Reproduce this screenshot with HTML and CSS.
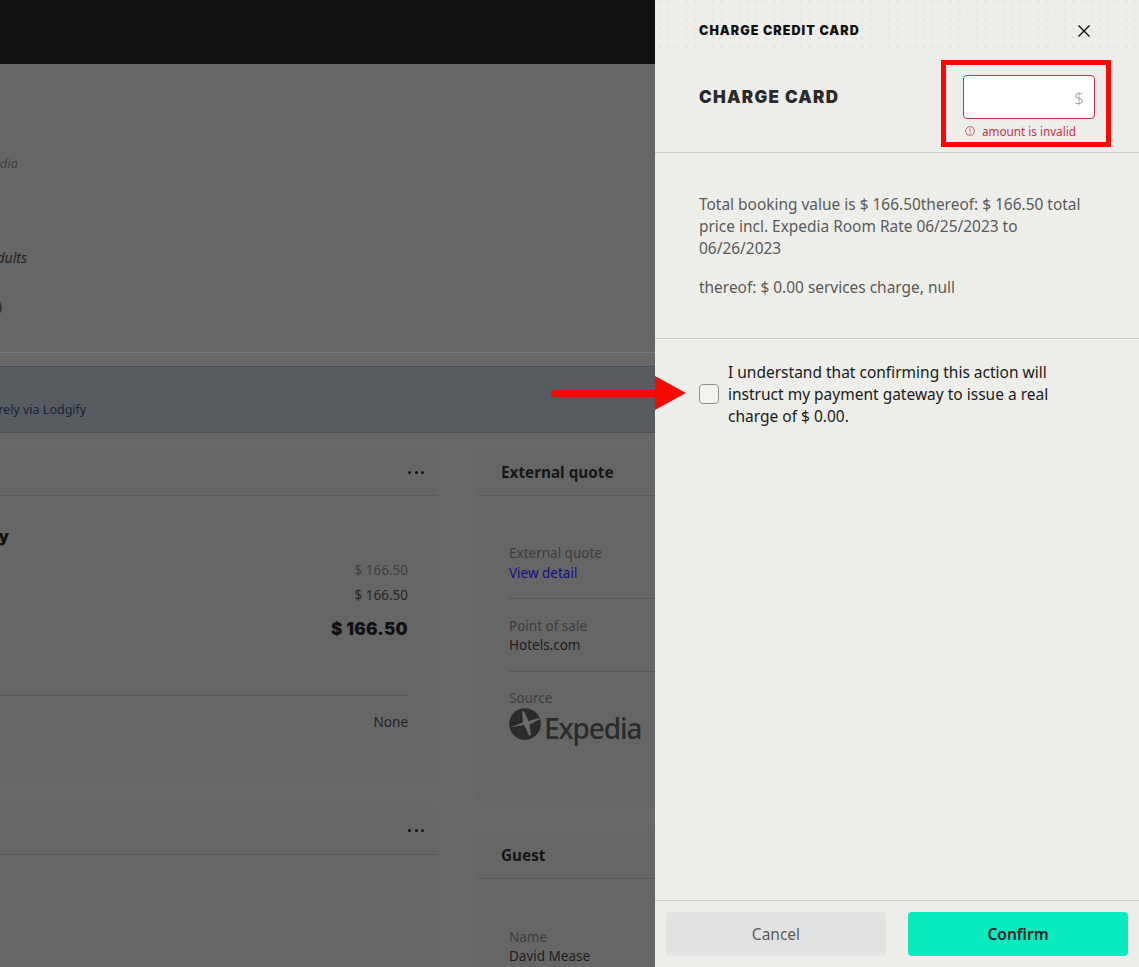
FILE: index.html
```html
<!DOCTYPE html>
<html lang="en">
<head>
<meta charset="utf-8">
<title>Charge credit card</title>
<link rel="stylesheet" href="styles.css">
</head>
<body>
<div class="page">
  <div class="topbar"></div>
  <section class="info">
    <div class="line source"><em>via Expedia</em></div>
    <div class="line adults"><em>2 adults</em></div>
    <div class="line nights"><span>(1 night)</span></div>
  </section>
  <div class="banner"><span class="banner-text">Charge the guest securely via Lodgify</span></div>
  <div class="columns">
    <div class="col">
      <article class="card card-price">
        <header class="card-head"><span class="dots"><i></i><i></i><i></i></span></header>
        <div class="price-body">
          <h3 class="price-title">Payment summary</h3>
          <div class="row muted">$ 166.50</div>
          <div class="row">$ 166.50</div>
          <div class="row total">$ 166.50</div>
          <div class="row none">None</div>
        </div>
      </article>
      <article class="card card-second">
        <header class="card-head"><span class="dots"><i></i><i></i><i></i></span></header>
      </article>
    </div>
    <div class="col">
      <article class="card card-quote">
        <header class="card-head side-head"><h2>External quote</h2></header>
        <div class="side-body">
          <div class="field ruled"><span class="label">External quote</span><a class="link" href="#">View detail</a></div>
          <div class="field ruled"><span class="label">Point of sale</span><span class="value">Hotels.com</span></div>
          <div class="field source-field"><span class="label">Source</span>
            <div class="logo">
              <svg class="logo-mark" viewBox="0 0 32 32" width="32" height="32" aria-hidden="true">
                <circle cx="16" cy="16" r="15.8" fill="#2b2b2b"/>
                <path d="M1 19.5 L14 14.5 L13 3 L15.5 4 L19.5 13 L30 10 L30.5 11.5 L20.5 16.5 L22 27 L20 27.5 L15 17 Z" fill="#6a6a6a"/>
              </svg>
              <span class="logo-text">Expedia</span>
            </div>
          </div>
        </div>
      </article>
      <article class="card card-guest">
        <header class="card-head side-head guest-head"><h2>Guest</h2></header>
        <div class="guest-body">
          <div class="field"><span class="label">Name</span><span class="value">David Mease</span></div>
        </div>
      </article>
    </div>
  </div>

  <aside class="drawer">
    <div class="drawer-top">
      <h1 class="drawer-title">CHARGE CREDIT CARD</h1>
      <svg class="close" viewBox="0 0 12 12" width="12" height="12" aria-hidden="true"><path d="M.5.5l11 11M11.5.5l-11 11" stroke="#111" stroke-width="1.4" fill="none"/></svg>
    </div>
    <div class="charge">
      <h2 class="charge-title">CHARGE CARD</h2>
      <div class="amount">
        <div class="input"><span>$</span></div>
        <div class="error">
          <svg viewBox="0 0 10 10" width="10" height="10" aria-hidden="true"><circle cx="5" cy="5" r="4.4" fill="none" stroke="#c0354a" stroke-width=".8"/><path d="M5 2.4v3.2M5 6.8v1" stroke="#c0354a" stroke-width=".8"/></svg>
          <span>amount is invalid</span>
        </div>
      </div>
    </div>
    <div class="details">
      <p>Total booking value is $ 166.50thereof: $ 166.50 total price incl. Expedia Room Rate 06/25/2023 to 06/26/2023</p>
      <p>thereof: $ 0.00 services charge, null</p>
    </div>
    <label class="consent">
      <span class="checkbox"></span>
      <span class="consent-text">I understand that confirming this action will instruct my payment gateway to issue a real charge of $ 0.00.</span>
    </label>
    <footer class="actions">
      <button class="btn cancel" type="button">Cancel</button>
      <button class="btn confirm" type="button">Confirm</button>
    </footer>
  </aside>

  <div class="mark-box"></div>
  <svg class="mark-arrow" viewBox="0 0 135 34" width="135" height="34" aria-hidden="true"><path d="M0 14h104V0l31 17-31 17V21H0z" fill="#f50a00"/></svg>
</div>
</body>
</html>
```
FILE: styles.css
```css
* { box-sizing: border-box; }
html, body { margin: 0; padding: 0; }
body { font-family: "Noto Sans", "Open Sans", sans-serif; font-size: 14px; color: #1d1d1d; }
h1, h2, h3, p { margin: 0; }

.page { position: relative; width: 1139px; height: 967px; overflow: hidden; background: #686868; display: flex; flex-direction: column; }
.topbar { flex: none; height: 64px; background: #121212; }

.info { flex: none; height: 289px; padding-top: 89px; background: #666; border-bottom: 1px solid #787878; display: flex; flex-direction: column; }
.line { display: flex; justify-content: flex-end; white-space: nowrap; height: 20px; line-height: 20px; font-size: 14px; }
.line.source { width: 18px; color: #3f3f3f; font-size: 13px; }
.line.adults { width: 27px; margin-top: 75px; color: #232323; }
.line.nights { width: 2px; margin-top: 28px; color: #232323; }

.banner { flex: none; margin-top: 13px; height: 67px; background: #565c60; border-top: 1px solid #48505a; border-bottom: 1px solid #48505a; padding-top: 33px; display: flex; }
.banner-text { margin-left: -133px; font-size: 12.5px; line-height: 20px; color: #1b2238; white-space: nowrap; }

.columns { flex: none; margin-top: 15px; margin-left: -400px; display: grid; grid-template-columns: 838px 400px; column-gap: 40px; }
.col { display: flex; flex-direction: column; }
.card { background: #666; border-radius: 6px; box-shadow: 0 2px 10px rgba(0,0,0,.02); }
.card-head { height: 48px; border-bottom: 1px solid #5a5a5a; display: flex; align-items: center; justify-content: flex-end; padding-right: 14px; }
.dots { display: flex; gap: 3.5px; margin-bottom: -1px; }
.dots i { width: 3px; height: 3px; border-radius: 50%; background: #141414; }

.card-price { height: 330px; }
.card-second { height: 160px; margin-top: 29px; }
.card-second .dots { margin-bottom: 1px; }
.price-body { padding: 62px 30px 0 0; position: relative; }
.price-title { position: absolute; right: 429px; top: 30px; font-size: 16px; font-weight: 900; line-height: 20px; color: #111; font-family: Inter, "Noto Sans", sans-serif; white-space: nowrap; }
.row { text-align: right; height: 25px; line-height: 25px; font-size: 13.5px; color: #262626; }
.row.muted { color: #404040; }
.row.total { margin-top: 9px; height: 26px; font-family: Inter, "Noto Sans", sans-serif; font-weight: 900; font-size: 17px; letter-spacing: .3px; color: #111; }
.row.none { margin-top: 52px; height: 52px; padding-top: 14px; border-top: 1px solid #595959; color: #222; }

.side-head { justify-content: flex-start; padding: 0 0 0 23px; }
.side-head h2 { font-size: 15.3px; line-height: 20px; font-weight: 700; color: #161616; }
.card-quote { height: 352px; }
.card-guest { height: 180px; margin-top: 32px; }
.guest-head { height: 47px; }
.side-body { padding: 47px 0 0 31px; }
.guest-body { padding: 48px 0 0 31px; }
.field { display: flex; flex-direction: column; font-size: 13.5px; line-height: 20px; }
.field.ruled { height: 56px; margin-bottom: 17px; border-bottom: 1px solid #575757; }
.source-field { margin-top: -1px; }
.label { color: #3c3c3c; }
.value { color: #1d1d1d; margin-top: -1px; }
.link { color: #10107e; text-decoration: none; }
.logo { display: flex; align-items: flex-start; gap: 3px; }
.logo-mark { flex: none; }
.logo-text { font-family: "Noto Sans", sans-serif; font-size: 28px; line-height: 36px; font-weight: 500; letter-spacing: -1.1px; color: #2b2b2b; margin-top: 2px; }

.drawer { position: absolute; top: 0; right: 0; bottom: 0; width: 484px; background: #edeee9; display: flex; flex-direction: column; }
.drawer-top { flex: none; height: 48px; padding: 22px 49px 0 44px; display: flex; justify-content: space-between; align-items: flex-start;
  background-image: radial-gradient(circle, #d6d7d1 0.7px, transparent 1.1px); background-size: 8.8px 8.9px; background-position: 0.6px -2.6px; }
.drawer-title { font-family: Inter, "Noto Sans", sans-serif; font-size: 12.5px; line-height: 18px; font-weight: 900; color: #111; letter-spacing: 1.05px; }
.close { margin-top: 3px; }
.charge { flex: none; height: 105px; padding: 27px 44px 0 44px; display: flex; justify-content: space-between; align-items: flex-start; border-bottom: 1px solid #c9c9c4; }
.charge-title { font-family: Inter, "Noto Sans", sans-serif; font-size: 17px; line-height: 22px; font-weight: 900; letter-spacing: 1.28px; color: #2a2a2a; margin-top: 11px; }
.amount { width: 132px; }
.input { height: 44px; background: #fff; border: 1px solid #c0354a; border-radius: 4px; display: flex; align-items: center; justify-content: flex-end; padding-right: 10px; color: #a0a0a0; font-size: 17px; font-weight: 300; }
.error { display: flex; align-items: center; gap: 7px; margin-top: 5px; padding-left: 2px; height: 14px; font-size: 11.7px; line-height: 14px; color: #c0354a; }
.details { flex: none; height: 186px; padding: 40px 50px 0 44px; border-bottom: 1px solid #c9c9c4; font-size: 15.45px; line-height: 22px; color: #5a5a5a; }
.details p + p { margin-top: 17px; }
.consent { flex: none; padding: 22px 44px 0; display: flex; align-items: center; gap: 9px; color: #1a1a1a; font-size: 15.5px; line-height: 22px; }
.checkbox { flex: none; width: 20px; height: 20px; border: 1px solid #8f8f8f; border-radius: 4px; background: #f3f3f0; }
.consent-text { width: 340px; }
.actions { margin-top: auto; flex: none; height: 67px; border-top: 1px solid #c9c9c4; padding: 11px; display: flex; justify-content: space-between; }
.btn { width: 220px; height: 44px; border: 0; border-radius: 4px; font-family: inherit; font-size: 15.5px; }
.cancel { background: #e2e2e2; color: #5c5c5c; }
.confirm { background: #07ebbe; color: #262626; font-weight: 600; }

.mark-box { position: absolute; left: 941px; top: 60px; width: 170px; height: 87px; border: 5px solid #f50a00; }
.mark-arrow { position: absolute; left: 551px; top: 376px; }
```
